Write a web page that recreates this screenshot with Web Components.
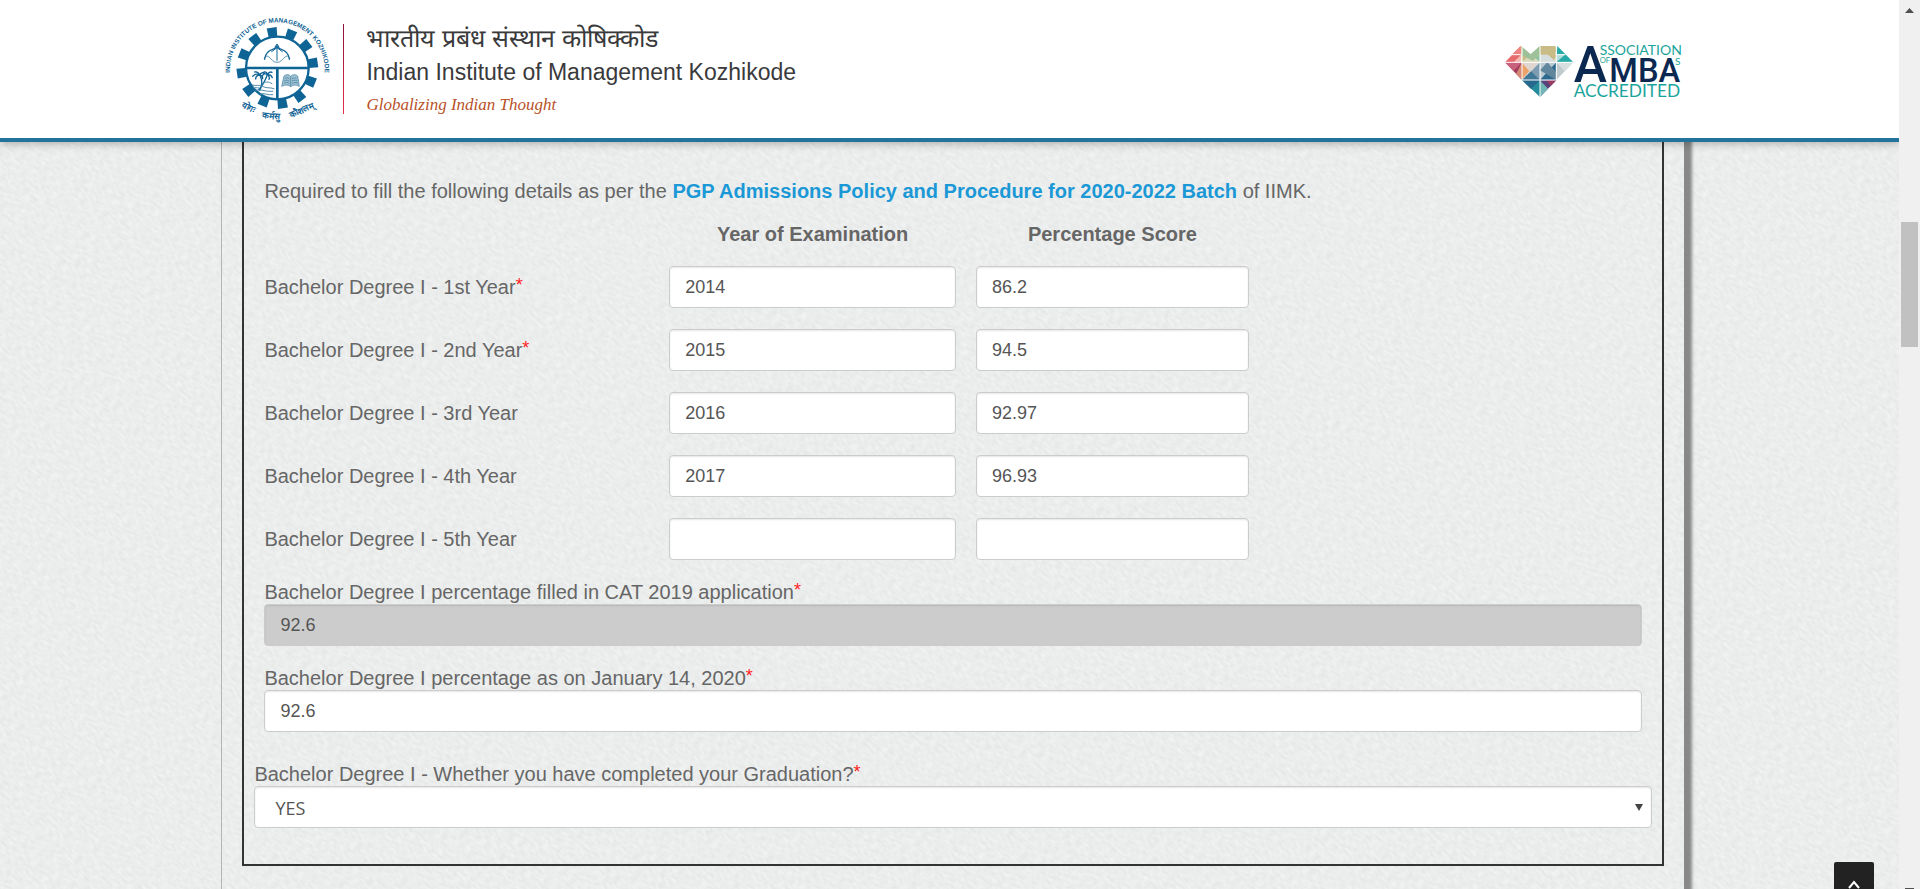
<!DOCTYPE html>
<html lang="en">
<head>
<meta charset="utf-8">
<meta name="viewport" content="width=device-width, initial-scale=1">
<title>IIM Kozhikode - PGP Admissions</title>
<style>
  body {
    margin: 0;
    height: 100vh;
    overflow: hidden;
    font-family: "Liberation Sans", Arial, sans-serif;
    font-size: 20px;
    line-height: 24px;
    color: #666;
    background: #ebeded;
  }

  form-panel p {
    margin: 0 0 -5px;
    line-height: 28px;
  }

  form-panel a {
    color: #1b98d6;
    font-weight: bold;
    text-decoration: none;
  }
</style>
</head>
<body>
<page-shell>
  <site-header slot="header"></site-header>
  <form-panel>
    <p>Required to fill the following details as per the <a href="#policy">PGP Admissions Policy and Procedure for 2020-2022 Batch</a> of IIMK.</p>
    <score-sheet></score-sheet>
    <text-field label="Bachelor Degree I percentage filled in CAT 2019 application" value="92.6" required disabled></text-field>
    <text-field label="Bachelor Degree I percentage as on January 14, 2020" value="92.6" required></text-field>
    <select-field slot="wide" label="Bachelor Degree I - Whether you have completed your Graduation?" options="YES,NO" required></select-field>
  </form-panel>
</page-shell>

<template id="page-shell">
  <style>
    :host {
      display: flex;
      height: 100%;
      overflow: hidden;
    }

    .view {
      position: relative;
      flex: 1;
      min-width: 0;
      overflow: hidden;
    }

    .paper {
      position: absolute;
      inset: 0;
      width: 100%;
      height: 100%;
    }

    .content {
      position: relative;
    }

    .top {
      position: absolute;
      right: 25px;
      bottom: -13px;
      width: 40px;
      height: 40px;
      padding: 6px 0 0;
      border: 0;
      border-radius: 2px;
      background: #222;
    }

    .top svg {
      display: block;
      margin: auto;
    }
  </style>
  <div class="view">
    <svg class="paper" aria-hidden="true">
      <filter id="grain" x="0" y="0" width="100%" height="100%" color-interpolation-filters="sRGB">
        <feTurbulence type="fractalNoise" baseFrequency="0.16 0.34" numOctaves="2" seed="4"></feTurbulence>
        <feColorMatrix values="0.08 0 0 0 0.882  0.08 0 0 0 0.89  0.08 0 0 0 0.888  0 0 0 0 1"></feColorMatrix>
      </filter>
      <rect x="-400" y="-1400" width="2900" height="2900" transform="rotate(42)" filter="url(#grain)"></rect>
    </svg>
    <div class="content">
      <slot name="header"></slot>
      <slot></slot>
    </div>
    <button class="top" type="button" aria-label="Back to top">
      <svg width="14" height="10" viewBox="0 0 14 10"><path d="M2 8 7 2l5 6" fill="none" stroke="#fff" stroke-width="2"></path></svg>
    </button>
  </div>
  <scroll-rail></scroll-rail>
</template>

<template id="scroll-rail">
  <style>
    :host {
      display: grid;
      grid-template-rows: 21px 201fr 125fr 521fr 21px;
      justify-items: center;
      width: 21px;
      background: #f0f0f0;
    }

    .thumb {
      grid-row: 3;
      width: 17px;
      background: #c1c1c1;
    }

    svg {
      fill: #505050;
    }

    .down {
      grid-row: 5;
      align-self: end;
    }
  </style>
  <svg width="9" height="13" viewBox="0 0 9 13" aria-hidden="true"><path d="M0 13 4.5 8 9 13z"></path></svg>
  <div class="thumb"></div>
  <svg class="down" width="9" height="1" viewBox="0 0 9 1" aria-hidden="true"><path d="M0 0h9v1H0z"></path></svg>
</template>

<template id="site-header">
  <style>
    :host {
      position: relative;
      z-index: 1;
      display: block;
      background: #fff;
      border-bottom: 4px solid #23729b;
      box-shadow: 0 2px 8px rgba(0, 0, 0, 0.25);
    }

    .bar {
      display: flex;
      align-items: center;
      width: 77%;
      height: 138px;
      margin: 0 auto;
    }

    iimk-seal {
      margin-left: 7px;
    }

    .rule {
      width: 1px;
      height: 90px;
      margin: 0 22px 0 12px;
      background: linear-gradient(#8a1238, #e8304c);
    }

    .names {
      flex: 1;
      color: #3a3a3c;
    }

    .names,
    amba-badge {
      margin-top: 4px;
    }

    .names div {
      white-space: nowrap;
    }

    .hindi {
      font-size: 25px;
      line-height: 36px;
    }

    .english {
      font-size: 23px;
      line-height: 32px;
    }

    .tagline {
      font: italic 17px/34px "Liberation Serif", serif;
      color: #b85228;
    }
  </style>
  <div class="bar">
    <iimk-seal></iimk-seal>
    <div class="rule"></div>
    <div class="names">
      <div class="hindi" lang="hi">भारतीय प्रबंध संस्थान कोषिक्कोड</div>
      <div class="english">Indian Institute of Management Kozhikode</div>
      <div class="tagline">Globalizing Indian Thought</div>
    </div>
    <amba-badge></amba-badge>
  </div>
</template>

<template id="iimk-seal">
  <style>
    :host {
      display: block;
    }

    svg {
      display: block;
      overflow: visible;
      fill: #0f6496;
    }

    text {
      font: bold 19px "Liberation Sans", sans-serif;
    }

    .motto {
      font: bold 26px "Liberation Sans", sans-serif;
      text-anchor: middle;
    }
  </style>
  <svg width="106" height="110" viewBox="45 40 318 330" role="img" aria-label="IIM Kozhikode seal">
    <path id="arc" d="M66 248A142 142 0 1 1 338 248" fill="none"></path>
    <text><textPath href="#arc" startOffset="50%" text-anchor="middle">INDIAN INSTITUTE OF MANAGEMENT KOZHIKODE</textPath></text>
    <g id="teeth"></g>
    <circle cx="202" cy="202" r="94" fill="#fff" stroke="#0f6496" stroke-width="7"></circle>
    <path d="M108 198h188v8H108zM198 202h8v94h-8z"></path>
    <g fill="none" stroke="#0f6496" stroke-width="4" stroke-linecap="round">
      <path d="M164 175c2-15 10-25 24-29 5-1 9-4 13-9 4 5 8 8 13 9 14 4 22 14 24 29"></path>
      <path d="M164 177c-5-6 4-15 13-8 11 9 12 16 24 16s13-7 24-16c9-7 18 2 13 8" stroke-width="2"></path>
      <path d="M201 134v45M195 139l6-9 6 9M185 153l16-12 16 12" stroke-width="3"></path>
    </g>
    <g fill="none" stroke="#0f6496" stroke-linecap="round">
      <path d="M149 221c8 17 9 33 0 48M173 220c-7 19-17 37-27 47" stroke-width="4"></path>
      <path d="M149 223c-8-5-15-3-21 4M149 223c-3-8-9-10-15-9M149 223c-9 1-12 7-12 12M149 223c4-7 10-8 14-5M149 223c8 1 9 7 9 11M173 222c-7-5-13-2-16 4M173 222c-1-7-7-9-11-8M173 222c3-7 8-9 13-7M173 222c7-1 12 4 14 9M173 222c5 4 6 9 4 14" stroke-width="4"></path>
      <path d="M127 253c10 5 22-3 31 4s22 2 34 7M137 269c14-6 27 5 51 3M151 280c12-5 22 5 37 2M157 250c8-8 19-8 29-1M130 261c6 2 11-2 17 1" stroke-width="3" stroke="#528eae"></path>
    </g>
    <path d="M222 226c8-6 16-5 20 1 5-6 13-7 21-1l5 31c-9-5-19-5-26 1-7-6-18-6-27-1z" fill="#9fc0d1" stroke="#3b7d9f" stroke-width="2"></path>
    <path d="M242 227v31M225 233q7-4 13 1M223 240q8-4 15 1M222 247q9-4 16 1M246 234q7-5 14-1M246 241q8-5 16-1M246 248q9-5 18-1" fill="none" stroke="#3b7d9f" stroke-width="2"></path>
    <text class="motto" transform="translate(112 328) rotate(26)">योगः</text>
    <text class="motto" transform="translate(183 355) rotate(4)">कर्मसु</text>
    <text class="motto" transform="translate(278 337) rotate(-24)">कौशलम्</text>
  </svg>
</template>

<template id="amba-badge">
  <style>
    :host {
      display: block;
    }

    svg {
      display: block;
      overflow: visible;
    }

    text {
      font-family: Lato, sans-serif;
      fill: #1aa59c;
    }

    .navy {
      font-family: Roboto, sans-serif;
      font-weight: 500;
      fill: #0b2850;
    }
  </style>
  <svg width="176" height="53" viewBox="78 75 528 159" role="img" aria-label="Association of MBAs accredited">
    <path d="M125 78 78 127h47z" fill="#e76b6d"></path>
    <path d="M98 104l27-26v26z" fill="#ee8382"></path>
    <path d="M104 127l22-23v23z" fill="#f2b9b1"></path>
    <path d="M125 78l30 24v25h-26z" fill="#c9bd84"></path>
    <path d="M129 127l26-25 28 25z" fill="#d9d9bd"></path>
    <path d="M155 102 183 78v49z" fill="#8fc2a2"></path>
    <path d="M129 81l26 21 28-24v26l-22 18-32-16z" fill="#9fc19a"></path>
    <path d="M183 78h49v49h-49z" fill="#dcd9c4"></path>
    <path d="M183 78h44l7 10-6 14 4 6-8 12-19-16h-22z" fill="#c9bb85"></path>
    <path d="M183 104h24l24 23h-48z" fill="#d5dddd"></path>
    <path d="M235 78 283 127h-51z" fill="#27aaa7"></path>
    <path d="M232 104h26l-26 23z" fill="#b4dcda"></path>
    <path d="M78 127h51v53z" fill="#a03a5c"></path>
    <path d="M78 127h51l-25 26z" fill="#c8617b"></path>
    <path d="M129 127h54l-54 54z" fill="#dfd6cf"></path>
    <path d="M129 127v53l-18-18z" fill="#d38a76"></path>
    <path d="M129 129v48l22-24z" fill="#eca269"></path>
    <path d="M183 127v54h-54z" fill="#7d9cb2"></path>
    <path d="M129 180l27-26 27 27z" fill="#3f7795"></path>
    <path d="M183 127h49v54h-49z" fill="#2d698e"></path>
    <path d="M183 127h49l-49 53z" fill="#bccad2"></path>
    <path d="M183 151l22-24 27 30v23z" fill="#5f869d"></path>
    <path d="M232 127h51l-51 53z" fill="#c0cacd"></path>
    <path d="M232 127h51l-26 27z" fill="#d8dfe0"></path>
    <path d="M129 180h54v51z" fill="#238b9a"></path>
    <path d="M129 180h54l-27 27z" fill="#26698c"></path>
    <path d="M183 181h49l-49 50z" fill="#57437a"></path>
    <path d="M232 181h-30l13 17z" fill="#9a3b62"></path>
    <path d="M183 181l24 25-24 25z" fill="#6fb6b5"></path>
    <path d="M78 127h205M129 82v98M183 78v153M232 78v102M129 180h103M98 104h27M232 104h27" fill="none" stroke="#fff" stroke-width="3"></path>
    <path d="M127 76l28 26 28-26z" fill="#fff"></path>
    <text x="362" y="106" font-size="42">SSOCIATION</text>
    <text x="362" y="130" font-size="23">OF</text>
    <text x="588" y="136" font-size="30">S</text>
    <text class="navy" x="284" y="187" font-size="150">A</text>
    <text class="navy" x="391" y="187" font-size="98">MBA</text>
    <text x="284" y="231" font-size="52">ACCREDITED</text>
  </svg>
</template>

<template id="form-panel">
  <style>
    :host {
      display: block;
      width: 77%;
      margin: 0 auto;
    }

    .sheet {
      height: 100vh;
      margin: -10px -3px 0 3px;
      padding: 10px 20px 0;
      border-left: 1px solid #b4b6b6;
      box-shadow: 9px 0 3px -1px #888;
    }

    .box {
      padding: 35px 10px 36px;
      border: 2px solid #333;
      border-top: 0;
    }

    .inset {
      display: flex;
      flex-direction: column;
      gap: 20px;
      padding: 0 10px 30px;
    }
  </style>
  <div class="sheet">
    <div class="box">
      <div class="inset"><slot></slot></div>
      <slot name="wide"></slot>
    </div>
  </div>
</template>

<script>
const FIELD_CSS = `
  :host {
    display: block;
  }

  label {
    display: block;
  }

  .star {
    font-size: 18px;
    line-height: 18px;
    vertical-align: text-top;
    color: #f22;
  }

  input,
  select {
    box-sizing: border-box;
    display: block;
    width: 100%;
    height: 42px;
    padding: 0 15px;
    border: 1px solid #ccc;
    border-radius: 4px;
    background-color: #fff;
    box-shadow: inset 0 1px 2px rgba(0, 0, 0, 0.1);
    color: #555;
    font: 18px "Liberation Sans", Arial, sans-serif;
  }

  input:disabled {
    background-color: #ccc;
  }

  select {
    appearance: none;
    padding: 2px 20px 0;
    font-family: "Open Sans", sans-serif;
    background-image: url("data:image/svg+xml,%3Csvg xmlns='http://www.w3.org/2000/svg' width='8' height='7'%3E%3Cpath d='M0 0h8L4 7z' fill='%23444'/%3E%3C/svg%3E");
    background-repeat: no-repeat;
    background-position: right 8px center;
  }
`;

const YEARS = [
  { name: '1st', year: '2014', score: '86.2', required: true },
  { name: '2nd', year: '2015', score: '94.5', required: true },
  { name: '3rd', year: '2016', score: '92.97' },
  { name: '4th', year: '2017', score: '96.93' },
  { name: '5th', year: '', score: '' }
];

const star = (on) => (on ? '<span class="star">*</span>' : '');

class TemplateElement extends HTMLElement {
  constructor() {
    super();
    const template = document.getElementById(this.localName);
    this.attachShadow({ mode: 'open' }).appendChild(template.content.cloneNode(true));
  }
}

class IimkSeal extends TemplateElement {
  connectedCallback() {
    let teeth = '';
    for (let i = 0; i < 12; i++) {
      teeth += `<path d="M187 80h30l-2 27h-26z" transform="rotate(${i * 30 - 8} 202 202)"></path>`;
    }
    this.shadowRoot.getElementById('teeth').innerHTML = teeth;
  }
}

class ScoreSheet extends HTMLElement {
  constructor() {
    super();
    this.attachShadow({ mode: 'open' });
  }

  connectedCallback() {
    const rows = YEARS.map((row, i) => `
      <label for="year${i}">Bachelor Degree I - ${row.name} Year${star(row.required)}</label>
      <input id="year${i}" value="${row.year}">
      <input id="score${i}" value="${row.score}" aria-label="${row.name} Year Percentage Score">
    `).join('');
    this.shadowRoot.innerHTML = `
      <style>
        ${FIELD_CSS}

        .grid {
          display: grid;
          grid-template-columns: 385fr 287fr 273fr 373fr;
          gap: 21px 20px;
          align-items: center;
        }

        .head {
          margin-bottom: -3px;
          line-height: 28px;
          font-weight: bold;
          text-align: center;
        }

        .year {
          grid-column: 2;
        }

        label {
          grid-column: 1;
        }
      </style>
      <div class="grid">
        <div class="head year">Year of Examination</div>
        <div class="head">Percentage Score</div>
        ${rows}
      </div>
    `;
  }
}

class TextField extends HTMLElement {
  constructor() {
    super();
    this.attachShadow({ mode: 'open' });
  }

  connectedCallback() {
    this.shadowRoot.innerHTML = `
      <style>${FIELD_CSS}</style>
      <label for="field">${this.getAttribute('label')}${star(this.hasAttribute('required'))}</label>
      <input id="field" value="${this.getAttribute('value')}" ${this.hasAttribute('disabled') ? 'disabled' : ''}>
    `;
  }
}

class SelectField extends HTMLElement {
  constructor() {
    super();
    this.attachShadow({ mode: 'open' });
  }

  connectedCallback() {
    const options = this.getAttribute('options').split(',').map((text) => `<option>${text}</option>`).join('');
    this.shadowRoot.innerHTML = `
      <style>${FIELD_CSS}</style>
      <label for="field">${this.getAttribute('label')}${star(this.hasAttribute('required'))}</label>
      <select id="field">${options}</select>
    `;
  }
}

customElements.define('page-shell', class extends TemplateElement {});
customElements.define('scroll-rail', class extends TemplateElement {});
customElements.define('site-header', class extends TemplateElement {});
customElements.define('iimk-seal', IimkSeal);
customElements.define('amba-badge', class extends TemplateElement {});
customElements.define('form-panel', class extends TemplateElement {});
customElements.define('score-sheet', ScoreSheet);
customElements.define('text-field', TextField);
customElements.define('select-field', SelectField);
</script>
</body>
</html>
